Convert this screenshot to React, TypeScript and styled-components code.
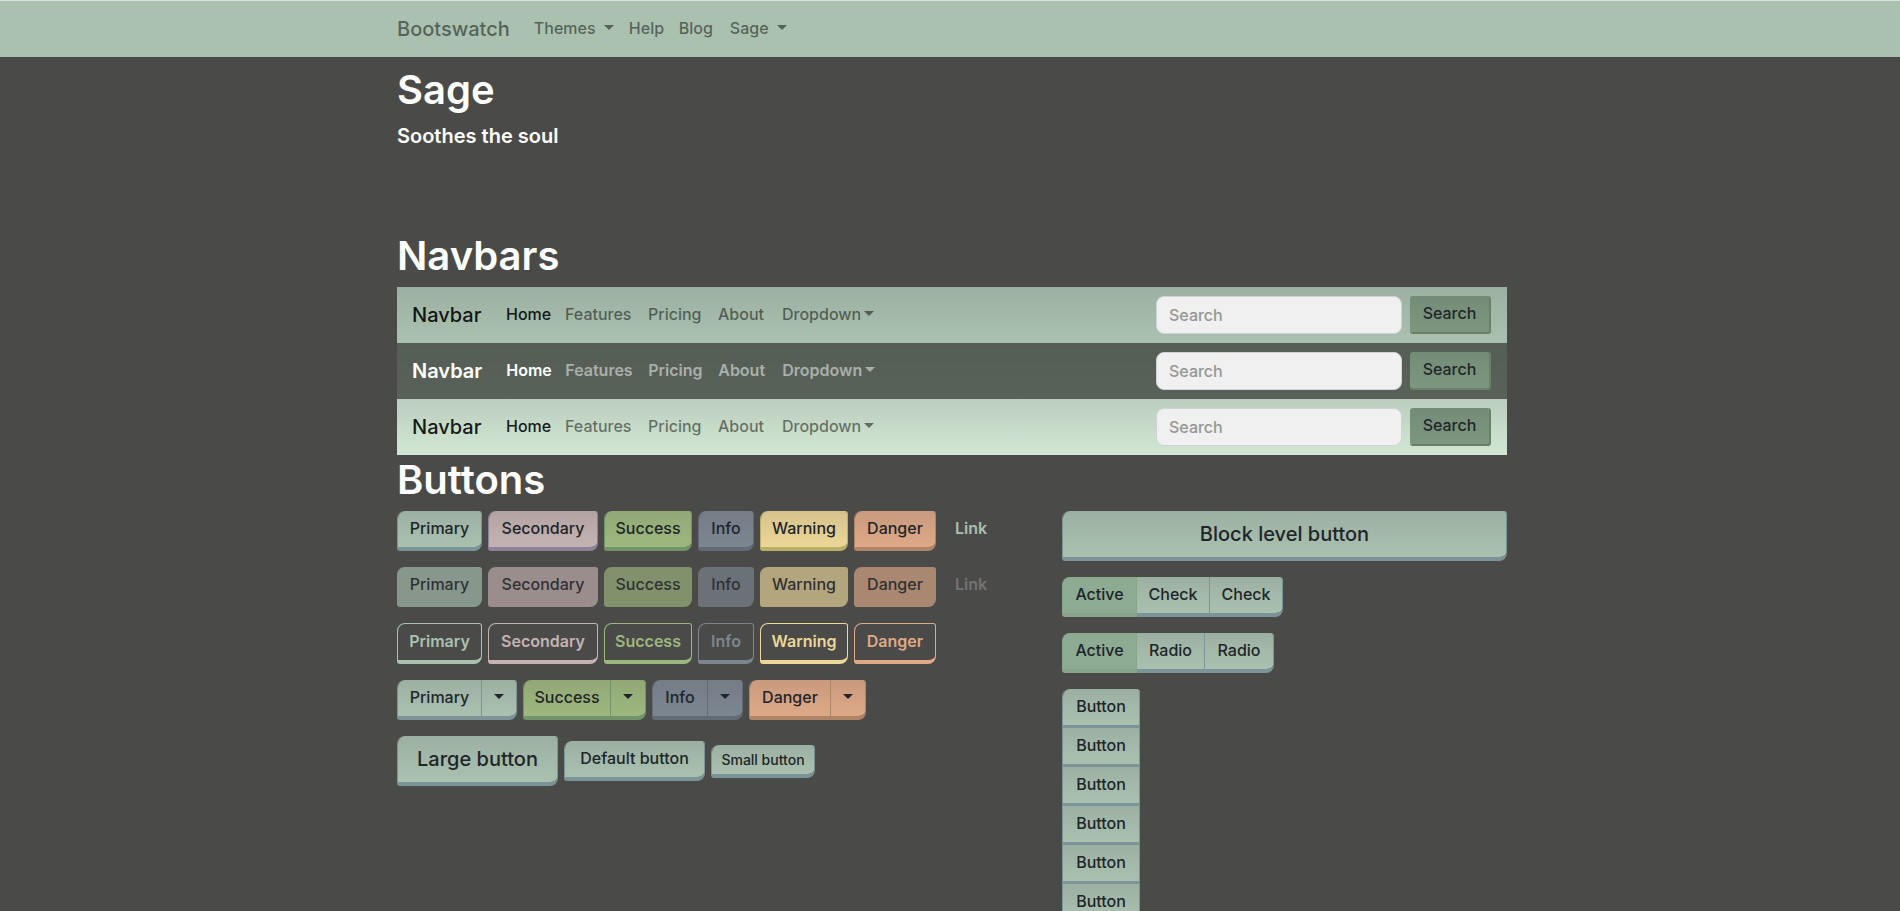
import React from "react";
import styled, { createGlobalStyle, css } from "styled-components";

const GlobalStyle = createGlobalStyle`
  *, *::before, *::after { box-sizing: border-box; }
  body {
    margin: 0;
    background: #4a4a48;
    color: #fff;
    font-family: Inter, "Open Sans", sans-serif;
    font-size: 16px;
    font-weight: 500;
    line-height: 24px;
  }
  button, input { font: inherit; }
`;

type Tone = { top: string; base: string; edge: string };

const tones: Record<string, Tone> = {
  Primary: { top: "#9cb0a1", base: "#aac1b0", edge: "#7b9497" },
  Secondary: { top: "#b2a3a3", base: "#c5b3b3", edge: "#8c8299" },
  Success: { top: "#92a876", base: "#9db87e", edge: "#71946a" },
  Info: { top: "#757d87", base: "#7c8691", edge: "#626b76" },
  Warning: { top: "#d6c28c", base: "#ecd798", edge: "#b9b065" },
  Danger: { top: "#c99a7e", base: "#dea987", edge: "#b08466" },
};

const schemes = {
  sage: { top: "#9cb0a1", base: "#aac1b0", strong: "rgba(0,0,0,.9)", soft: "rgba(0,0,0,.5)", weight: 500 },
  dark: { top: "#545e54", base: "#586259", strong: "#fff", soft: "rgba(255,255,255,.5)", weight: 600 },
  light: { top: "#bccebe", base: "#d1e7d4", strong: "rgba(0,0,0,.9)", soft: "rgba(0,0,0,.5)", weight: 500 },
};
type Scheme = keyof typeof schemes;

const Container = styled.div`
  max-width: 1144px;
  margin: 0 auto;
  padding: 0 15px 0 19px;
`;

const TopBar = styled.header`
  background: #aac1b0;
  border-top: 1px solid #dcdfe0;
`;

const TopNav = styled.nav`
  display: flex;
  align-items: center;
  height: 56px;
  color: rgba(0, 0, 0, 0.5);
`;

const Brand = styled.a<{ $width: number }>`
  min-width: ${(p) => p.$width}px;
  margin-right: 16px;
  color: inherit;
  font-size: 20px;
  line-height: 30px;
  text-decoration: none;
  white-space: nowrap;
`;

const NavItem = styled.a<{ $width: number }>`
  min-width: ${(p) => p.$width}px;
  padding: 7px 0 9px 8px;
  color: inherit;
  text-decoration: none;
  white-space: nowrap;
`;

const Caret = styled.span<{ $gap?: number }>`
  display: inline-block;
  margin-left: ${(p) => p.$gap ?? 0}px;
  vertical-align: 4px;
  border: 5px solid transparent;
  border-top-color: currentColor;
  border-bottom: 0;
`;

const Title = styled.h1`
  margin: 0 0 6px;
  font-size: 40px;
  font-weight: 600;
  line-height: 50px;
`;

const Intro = styled.section`
  padding-top: 8px;
  margin-bottom: 80px;
`;

const Lead = styled.p`
  margin: 0;
  font-size: 20px;
  font-weight: 600;
  line-height: 30px;
`;

const Bar = styled.nav<{ $scheme: Scheme }>`
  display: flex;
  align-items: center;
  height: 56px;
  padding: 0 16px 0 15px;
  background: linear-gradient(${(p) => schemes[p.$scheme].top}, ${(p) => schemes[p.$scheme].base});
  color: ${(p) => schemes[p.$scheme].soft};

  ${Brand}, ${NavItem} {
    font-weight: ${(p) => schemes[p.$scheme].weight};
  }
  ${Brand}, ${NavItem}[aria-current] {
    color: ${(p) => schemes[p.$scheme].strong};
  }
`;

const SearchForm = styled.form`
  display: flex;
  gap: 8px;
  margin-left: auto;
`;

const SearchInput = styled.input`
  width: 246px;
  height: 38px;
  padding: 6px 12px;
  border: 1px solid #ced4da;
  border-radius: 8px;
  background: #f0f0f0;
  color: #495057;
  &::placeholder { color: #949794; opacity: 1; }
`;

const SearchButton = styled.button`
  width: 81px;
  padding: 5px 12px 7px;
  border: solid #6a806b;
  border-width: 0 2px 2px 0;
  border-radius: 3px;
  background: linear-gradient(#748c78, #7c977f) padding-box;
  color: #212529;
`;

const Columns = styled.div`
  display: grid;
  grid-template-columns: minmax(0, 1fr) 445px;
  gap: 30px;
`;

const Stack = styled.div`
  display: flex;
  flex-direction: column;
  align-items: flex-start;
  gap: 16px;
`;

const Row = styled.div`
  display: flex;
  align-items: center;
  gap: 6px;
`;

const sizes = {
  lg: css`padding: 8px 16px; font-size: 20px; line-height: 30px;`,
  md: css`padding: 5px 0 7px;`,
  sm: css`padding: 4px 0; font-size: 14px; line-height: 21px;`,
};

type FaceProps = {
  $tone?: Tone;
  $width?: number;
  $size?: keyof typeof sizes;
  $outline?: boolean;
};

const face = css<FaceProps>`
  min-width: ${(p) => p.$width ?? 0}px;
  ${(p) => sizes[p.$size ?? "md"]}
  border: solid ${(p) => (p.$tone ?? tones.Primary).edge};
  border-width: 0 1px 4px;
  border-radius: 8px 3px;
  background: linear-gradient(
    ${(p) => (p.$tone ?? tones.Primary).top},
    ${(p) => (p.$tone ?? tones.Primary).base}
  ) padding-box;
  color: #212529;
  text-align: center;
  white-space: nowrap;
  cursor: pointer;
`;

const Button = styled.button<FaceProps>`
  ${face}

  &:disabled {
    border-color: ${(p) => (p.$tone ?? tones.Primary).base};
    background: ${(p) => (p.$tone ?? tones.Primary).base};
    opacity: 0.65;
  }

  ${(p) =>
    p.$outline &&
    css`
      border-color: ${(p.$tone ?? tones.Primary).base};
      border-top-width: 1px;
      background: transparent;
      color: ${(p.$tone ?? tones.Primary).base};
      font-weight: 600;
    `}
`;

const LinkButton = styled.button`
  padding: 5px 13px 11px;
  border: 0;
  background: none;
  color: #aac1b0;
  font-weight: 600;
  &:disabled { color: #747472; }
`;

const BlockButton = styled(Button)`
  width: 100%;
`;

const Toggle = styled.label<FaceProps>`
  ${face}

  &:has(input:checked) {
    border-color: #87a58c;
    background: #8dab93;
  }
`;

const HiddenInput = styled.input`
  position: absolute;
  margin: 0;
  opacity: 0;
  pointer-events: none;
`;

const Group = styled.div`
  display: flex;

  > :not(:first-child) {
    margin-left: -1px;
    border-top-left-radius: 0;
    border-bottom-left-radius: 0;
  }
  > :not(:last-child) {
    border-top-right-radius: 0;
    border-bottom-right-radius: 0;
  }
  > :has(input:checked) { z-index: 1; }
`;

const VerticalGroup = styled.div`
  display: flex;
  flex-direction: column;

  > :not(:first-child) {
    margin-top: -1px;
    border-top-left-radius: 0;
    border-top-right-radius: 0;
  }
  > :not(:last-child) {
    border-bottom-left-radius: 0;
    border-bottom-right-radius: 0;
  }
`;

const kinds = [
  { name: "Primary", width: 85 },
  { name: "Secondary", width: 110 },
  { name: "Success", width: 88 },
  { name: "Info", width: 56 },
  { name: "Warning", width: 88 },
  { name: "Danger", width: 82 },
];

const splitKinds = kinds.filter((k) => ["Primary", "Success", "Info", "Danger"].includes(k.name));

function SampleBar({ scheme }: { scheme: Scheme }) {
  return (
    <Bar $scheme={scheme}>
      <Brand href="#" $width={70}>Navbar</Brand>
      <NavItem href="#" $width={59} aria-current="page">Home</NavItem>
      <NavItem href="#" $width={83}>Features</NavItem>
      <NavItem href="#" $width={70}>Pricing</NavItem>
      <NavItem href="#" $width={64}>About</NavItem>
      <NavItem href="#" $width={107}>Dropdown<Caret $gap={3} /></NavItem>
      <SearchForm onSubmit={(e) => e.preventDefault()}>
        <SearchInput type="text" placeholder="Search" aria-label="Search" />
        <SearchButton type="submit">Search</SearchButton>
      </SearchForm>
    </Bar>
  );
}

export default function App() {
  return (
    <>
      <GlobalStyle />
      <TopBar>
        <Container>
          <TopNav>
            <Brand href="#" $width={112}>Bootswatch</Brand>
            <NavItem href="#" $width={95}>Themes <Caret $gap={4} /></NavItem>
            <NavItem href="#" $width={50}>Help</NavItem>
            <NavItem href="#" $width={51}>Blog</NavItem>
            <NavItem href="#" $width={74}>Sage <Caret $gap={4} /></NavItem>
          </TopNav>
        </Container>
      </TopBar>
      <Container as="main">
        <Intro>
          <Title>Sage</Title>
          <Lead>Soothes the soul</Lead>
        </Intro>
        <section>
          <Title as="h2">Navbars</Title>
          <SampleBar scheme="sage" />
          <SampleBar scheme="dark" />
          <SampleBar scheme="light" />
        </section>
        <section>
          <Title as="h2">Buttons</Title>
          <Columns>
            <Stack>
              <Row>
                {kinds.map((k) => (
                  <Button key={k.name} $tone={tones[k.name]} $width={k.width}>{k.name}</Button>
                ))}
                <LinkButton>Link</LinkButton>
              </Row>
              <Row>
                {kinds.map((k) => (
                  <Button key={k.name} $tone={tones[k.name]} $width={k.width} disabled>{k.name}</Button>
                ))}
                <LinkButton disabled>Link</LinkButton>
              </Row>
              <Row>
                {kinds.map((k) => (
                  <Button key={k.name} $tone={tones[k.name]} $width={k.width} $outline>{k.name}</Button>
                ))}
              </Row>
              <Row>
                {splitKinds.map((k) => (
                  <Group key={k.name}>
                    <Button $tone={tones[k.name]} $width={k.width}>{k.name}</Button>
                    <Button $tone={tones[k.name]} $width={36} aria-label={`${k.name} menu`}><Caret /></Button>
                  </Group>
                ))}
              </Row>
              <Row>
                <Button $size="lg" $width={161}>Large button</Button>
                <Button $width={141}>Default button</Button>
                <Button $size="sm" $width={104}>Small button</Button>
              </Row>
            </Stack>
            <Stack>
              <BlockButton $size="lg">Block level button</BlockButton>
              <Group>
                <Toggle $width={75}><HiddenInput type="checkbox" defaultChecked />Active</Toggle>
                <Toggle $width={74}><HiddenInput type="checkbox" />Check</Toggle>
                <Toggle $width={74}><HiddenInput type="checkbox" />Check</Toggle>
              </Group>
              <Group>
                <Toggle $width={75}><HiddenInput type="radio" name="option" defaultChecked />Active</Toggle>
                <Toggle $width={69}><HiddenInput type="radio" name="option" />Radio</Toggle>
                <Toggle $width={70}><HiddenInput type="radio" name="option" />Radio</Toggle>
              </Group>
              <VerticalGroup>
                {[1, 2, 3, 4, 5, 6].map((n) => (
                  <Button key={n} $width={78}>Button</Button>
                ))}
              </VerticalGroup>
            </Stack>
          </Columns>
        </section>
      </Container>
    </>
  );
}
